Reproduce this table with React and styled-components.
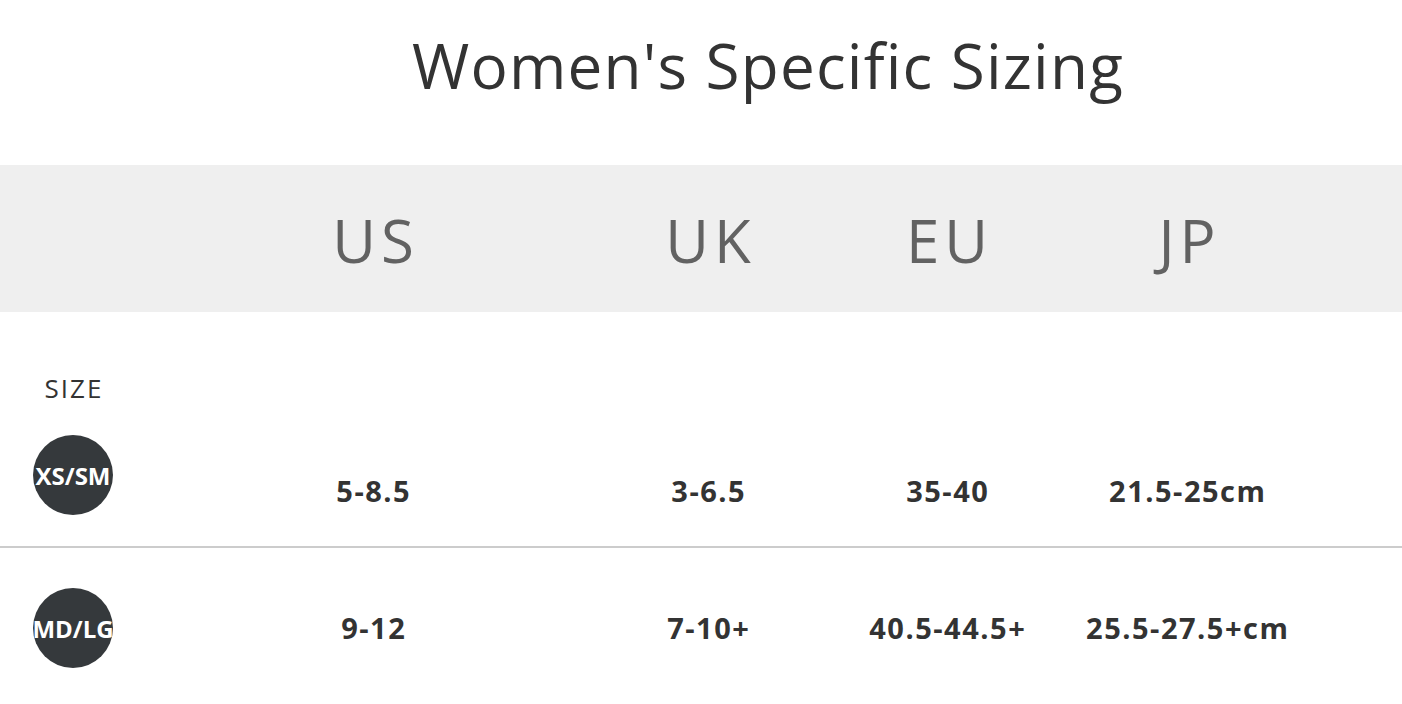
import React from "react";
import styled, { createGlobalStyle } from "styled-components";

const Global = createGlobalStyle`
  html, body { margin: 0; padding: 0; background: #ffffff; }
  body { font-family: "Open Sans", "Liberation Sans", sans-serif; overflow: hidden; }
`;

const Page = styled.div`
  width: 1402px;
  background: #fff;
`;

const Title = styled.h1`
  margin: 0;
  height: 165px;
  box-sizing: border-box;
  padding: 26px 0 0 134px;
  text-align: center;
  font-weight: 400;
  font-size: 62px;
  line-height: 78px;
  color: #333333;
  letter-spacing: 1.2px;
`;

const Grid = styled.div`
  display: grid;
  grid-template-columns: 146px 454px 216px 262px 218px 1fr;
`;

const HeaderRow = styled(Grid)`
  background: #efefef;
  height: 147px;
  align-items: center;
`;

const HeadCell = styled.div`
  text-align: center;
  font-size: 60px;
  font-weight: 400;
  color: #626262;
  line-height: 70px;
  padding-top: 2px;
  letter-spacing: 5px;
  padding-left: 5px;
`;

const Row = styled(Grid)`
  border-bottom: ${(p) => (p.$divider ? "2px solid #cccccc" : "none")};
  min-height: ${(p) => p.$h}px;
  box-sizing: border-box;
`;

const SizeCell = styled.div`
  display: flex;
  flex-direction: column;
  align-items: center;
  justify-content: ${(p) => (p.$withLabel ? "flex-end" : "center")};
  padding-bottom: ${(p) => (p.$withLabel ? 31 : 0)}px;
`;

const SizeLabel = styled.div`
  font-size: 26px;
  color: #333;
  line-height: 30px;
  margin-bottom: 32px;
  letter-spacing: 2px;
  padding-left: 2px;
`;

const Badge = styled.div`
  width: 80px;
  height: 80px;
  border-radius: 50%;
  background: #35393c;
  display: flex;
  align-items: center;
  justify-content: center;
  color: #fff;
  font-weight: 700;
  font-size: 24px;
  letter-spacing: 0px;
  white-space: nowrap;
  overflow: hidden;
`;

const ValueCell = styled.div`
  text-align: center;
  font-weight: 700;
  font-size: 29px;
  color: #333333;
  line-height: 32px;
  letter-spacing: 1.5px;
  padding-left: 1.5px;
  align-self: ${(p) => (p.$bottom ? "end" : "center")};
  padding-bottom: ${(p) => (p.$bottom ? 39 : 0)}px;
`;

const headers = ["US", "UK", "EU", "JP"];
const rows = [
  { size: "XS/SM", values: ["5-8.5", "3-6.5", "35-40", "21.5-25cm"] },
  { size: "MD/LG", values: ["9-12", "7-10+", "40.5-44.5+", "25.5-27.5+cm"] },
];

export default function App() {
  return (
    <Page>
      <Global />
      <Title>Women's Specific Sizing</Title>
      <HeaderRow>
        <div />
        {headers.map((h) => (
          <HeadCell key={h}>{h}</HeadCell>
        ))}
        <div />
      </HeaderRow>
      <Row $divider $h={236}>
        <SizeCell $withLabel>
          <SizeLabel>SIZE</SizeLabel>
          <Badge>{rows[0].size}</Badge>
        </SizeCell>
        {rows[0].values.map((v) => (
          <ValueCell key={v} $bottom>
            {v}
          </ValueCell>
        ))}
        <div />
      </Row>
      <Row $h={160}>
        <SizeCell>
          <Badge>{rows[1].size}</Badge>
        </SizeCell>
        {rows[1].values.map((v) => (
          <ValueCell key={v}>{v}</ValueCell>
        ))}
        <div />
      </Row>
    </Page>
  );
}
